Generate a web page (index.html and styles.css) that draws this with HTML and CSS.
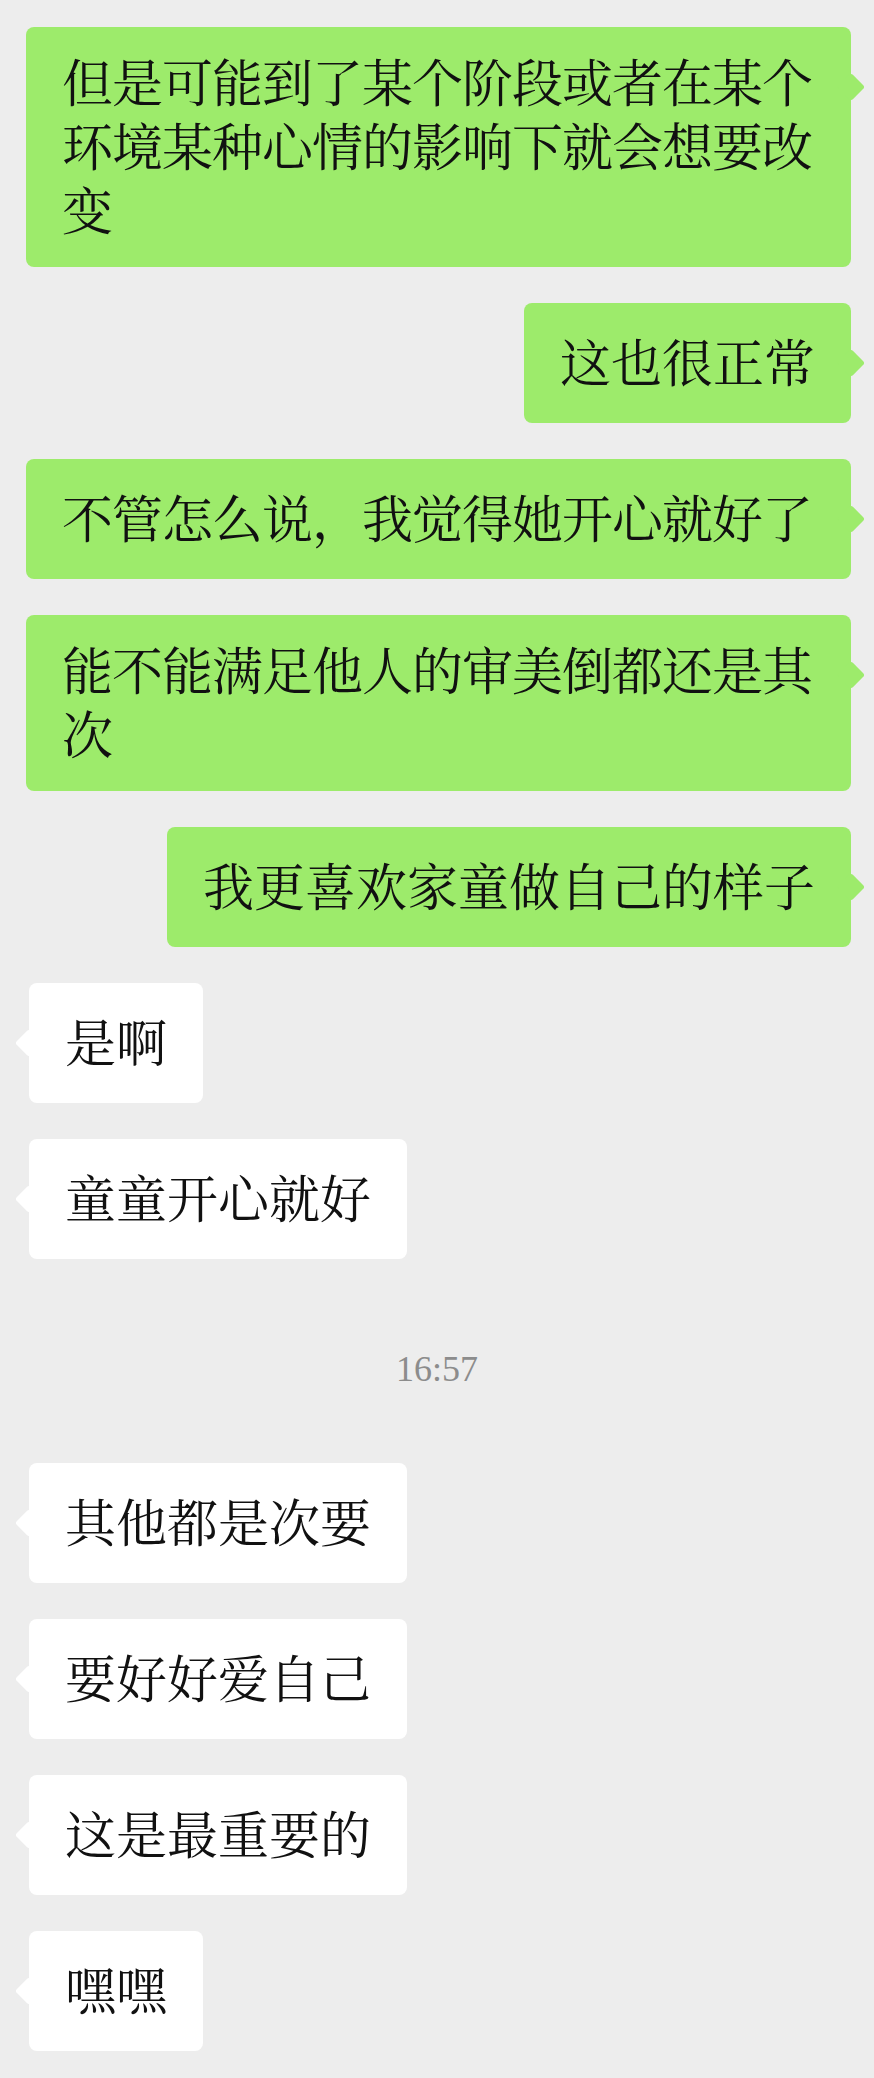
FILE: index.html
```html
<!DOCTYPE html>
<html lang="zh-CN">
<head>
<meta charset="utf-8">
<title>聊天记录</title>
<link rel="stylesheet" href="styles.css">
</head>
<body>
<main class="chat">
  <div class="row row--me"><div class="bubble bubble--me bubble--wrap">但是可能到了某个阶段或者在某个环境某种心情的影响下就会想要改变</div></div>
  <div class="row row--me"><div class="bubble bubble--me">这也很正常</div></div>
  <div class="row row--me"><div class="bubble bubble--me bubble--wrap">不管怎么说，我觉得她开心就好了</div></div>
  <div class="row row--me"><div class="bubble bubble--me bubble--wrap">能不能满足他人的审美倒都还是其次</div></div>
  <div class="row row--me"><div class="bubble bubble--me">我更喜欢家童做自己的样子</div></div>
  <div class="row row--other"><div class="bubble bubble--other">是啊</div></div>
  <div class="row row--other"><div class="bubble bubble--other">童童开心就好</div></div>
  <div class="time">16:57</div>
  <div class="row row--other"><div class="bubble bubble--other">其他都是次要</div></div>
  <div class="row row--other"><div class="bubble bubble--other">要好好爱自己</div></div>
  <div class="row row--other"><div class="bubble bubble--other">这是最重要的</div></div>
  <div class="row row--other"><div class="bubble bubble--other">嘿嘿</div></div>
</main>
</body>
</html>
```

FILE: styles.css
```css
html, body {
  margin: 0;
  padding: 0;
  background: #ededed;
}

.chat {
  display: flex;
  flex-direction: column;
  gap: 36px;
  padding: 27px 23px;
}

.row {
  display: flex;
}

.row--me {
  justify-content: flex-end;
}

.row--other {
  justify-content: flex-start;
  padding-left: 6px;
}

.bubble {
  position: relative;
  box-sizing: border-box;
  max-width: 825px;
  min-height: 120px;
  padding: 21px 36px 27px;
  display: flex;
  align-items: center;
  border-radius: 8px;
  font-family: "Noto Serif CJK SC", "Noto Sans CJK SC", serif;
  font-size: 51px;
  line-height: 64px;
  color: #111111;
  word-break: break-all;
}

.bubble--wrap {
  width: 100%;
  letter-spacing: -1px;
}

.bubble--me {
  background: #9deb6b;
}

.bubble--other {
  background: #ffffff;
}

.bubble::after {
  content: "";
  position: absolute;
  top: 50px;
  width: 20px;
  height: 20px;
  border-radius: 3px;
  transform: rotate(45deg);
}

.bubble--me::after {
  right: -10px;
  background: #9deb6b;
}

.bubble--other::after {
  left: -10px;
  background: #ffffff;
}

.time {
  padding: 54px 0 38px;
  text-align: center;
  font-family: "Liberation Serif", serif;
  font-size: 36px;
  line-height: 40px;
  color: #8c8c8c;
}
```
